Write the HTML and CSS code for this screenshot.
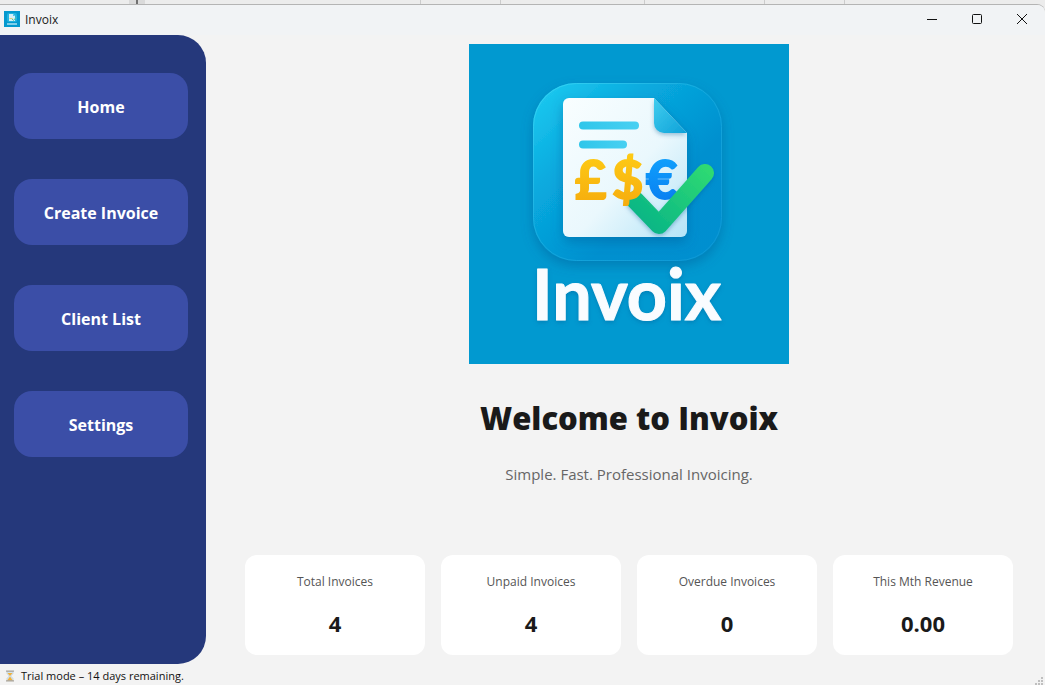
FILE: index.html
```html
<!DOCTYPE html>
<html lang="en">
<head>
<meta charset="utf-8">
<title>Invoix</title>
<link rel="stylesheet" href="styles.css">
</head>
<body>
<div class="backdrop"></div>
<div class="window">
  <header class="titlebar">
    <svg class="app-icon" viewBox="0 0 16 16" aria-hidden="true">
      <rect width="16" height="16" fill="#0499cf"/>
      <rect x="3" y="2" width="10" height="9" rx="2" fill="#22b3e0"/>
      <path d="M5 3h4l2 2v5H5z" fill="#d4f0f8"/>
      <path d="M9 3l2 2H9z" fill="#4cc3e6"/>
      <path d="M5.500 7.500h3" stroke="#d9cf7c"/>
      <path d="M8 8l1.500 1.500L12 6.500" stroke="#5fc49a" fill="none"/>
      <path d="M3 13h10" stroke="#7fcfea" stroke-width="2"/>
    </svg>
    <span class="app-name">Invoix</span>
    <div class="window-controls">
      <button class="window-button" type="button" aria-label="Minimize"><svg viewBox="0 0 12 12"><path d="M1 6.500h10"/></svg></button>
      <button class="window-button" type="button" aria-label="Maximize"><svg viewBox="0 0 12 12"><rect x="1.500" y="1.500" width="9" height="9" rx="1"/></svg></button>
      <button class="window-button" type="button" aria-label="Close"><svg viewBox="0 0 12 12"><path d="M1 1l10 10M11 1L1 11"/></svg></button>
    </div>
  </header>
  <div class="workspace">
    <nav class="sidebar" aria-label="Main">
      <button class="nav-button" type="button">Home</button>
      <button class="nav-button" type="button">Create Invoice</button>
      <button class="nav-button" type="button">Client List</button>
      <button class="nav-button" type="button">Settings</button>
    </nav>
    <main class="content">
      <svg class="logo" viewBox="0 0 320 320" role="img" aria-label="Invoix logo">
        <defs>
          <linearGradient id="tile" x1="0" y1="0" x2="1" y2="1">
            <stop offset="0" stop-color="#20cdf2"/><stop offset=".3" stop-color="#08abdf"/><stop offset=".65" stop-color="#0290cf"/><stop offset="1" stop-color="#078fd0"/>
          </linearGradient>
          <linearGradient id="rim" x1="0" y1="0" x2="1" y2="1">
            <stop offset="0" stop-color="#35d6f6"/><stop offset=".5" stop-color="#14a6dc"/><stop offset="1" stop-color="#0d97d5"/>
          </linearGradient>
          <linearGradient id="paper" x1="0" y1="0" x2="1" y2="1">
            <stop offset="0" stop-color="#f9feff"/><stop offset=".55" stop-color="#eaf8fd"/><stop offset="1" stop-color="#b5e4f7"/>
          </linearGradient>
          <linearGradient id="fold" x1="0" y1="0" x2="1" y2="1">
            <stop offset="0" stop-color="#41cdef"/><stop offset="1" stop-color="#0da1d8"/>
          </linearGradient>
          <linearGradient id="line"><stop offset="0" stop-color="#2fc6ea"/><stop offset="1" stop-color="#48d0f2"/></linearGradient>
          <linearGradient id="gold" x1="0" y1="0" x2="0" y2="1"><stop offset="0" stop-color="#ffcf16"/><stop offset="1" stop-color="#f5a90d"/></linearGradient>
          <linearGradient id="blue" x1="0" y1="0" x2="0" y2="1"><stop offset="0" stop-color="#11a8ff"/><stop offset="1" stop-color="#0879ef"/></linearGradient>
          <linearGradient id="green" gradientUnits="userSpaceOnUse" x1="238" y1="122" x2="178" y2="188"><stop offset="0" stop-color="#2fda72"/><stop offset="1" stop-color="#08b486"/></linearGradient>
          <filter id="shadow" x="-20%" y="-20%" width="140%" height="150%"><feDropShadow dx="0" dy="5" stdDeviation="6" flood-color="#00558f" flood-opacity=".4"/></filter>
          <filter id="soft" x="-20%" y="-20%" width="140%" height="150%"><feDropShadow dx="0" dy="2" stdDeviation="2" flood-color="#00558f" flood-opacity=".35"/></filter>
        </defs>
        <rect width="320" height="320" fill="#0199d0"/>
        <rect x="64" y="39" width="189" height="178" rx="43" fill="url(#tile)" filter="url(#shadow)"/>
        <rect x="64.500" y="39.500" width="188" height="177" rx="43" fill="none" stroke="url(#rim)"/>
        <path d="M100 54h85l33 35v98a6 6 0 0 1-6 6H100a6 6 0 0 1-6-6V60a6 6 0 0 1 6-6z" fill="url(#paper)" filter="url(#shadow)"/>
        <path d="M185 54l33 35h-23a10 10 0 0 1-10-10z" fill="url(#fold)" filter="url(#soft)"/>
        <rect x="110" y="77.500" width="60" height="8" rx="4" fill="url(#line)"/>
        <rect x="110" y="96.500" width="48" height="8" rx="4" fill="url(#line)"/>
        <text class="currency" x="177" y="155" fill="url(#blue)" stroke="url(#blue)">€</text>
        <path d="M166 156l24 25 46-52" fill="none" stroke="url(#green)" stroke-width="18" stroke-linecap="round" stroke-linejoin="round" filter="url(#soft)"/>
        <text class="currency" x="106" y="155" fill="url(#gold)" stroke="url(#gold)">£</text>
        <text class="currency" x="143" y="155" fill="url(#gold)" stroke="url(#gold)">$</text>
        <text class="wordmark" x="63" y="276" filter="url(#soft)">Invoix</text>
      </svg>
      <h1 class="welcome">Welcome to Invoix</h1>
      <p class="tagline">Simple. Fast. Professional Invoicing.</p>
      <section class="stats" aria-label="Summary">
        <article class="stat"><h2 class="stat-label">Total Invoices</h2><p class="stat-value">4</p></article>
        <article class="stat"><h2 class="stat-label">Unpaid Invoices</h2><p class="stat-value">4</p></article>
        <article class="stat"><h2 class="stat-label">Overdue Invoices</h2><p class="stat-value">0</p></article>
        <article class="stat"><h2 class="stat-label">This Mth Revenue</h2><p class="stat-value">0.00</p></article>
      </section>
    </main>
  </div>
  <footer class="statusbar">
    <svg class="hourglass" viewBox="0 0 10 12" aria-hidden="true">
      <path d="M2 1.500h6v2L5.700 6 8 8.500v2H2v-2L4.300 6 2 3.500z" fill="#d3e4ee" stroke="#b9cbd6" stroke-width=".6"/>
      <path d="M2.500 3h5L5 6zM5 6.500l2.800 4H2.200z" fill="#f2b13a"/>
      <path d="M1 1.200h8M1 10.800h8" stroke="#a8a39a" stroke-width="1.200"/>
    </svg>
    <span>Trial mode – 14 days remaining.</span>
    <svg class="grip" viewBox="0 0 8 8" aria-hidden="true"><path d="M6 0h2v2H6zM3 3h2v2H3zM6 3h2v2H6zM0 6h2v2H0zM3 6h2v2H3zM6 6h2v2H6z" fill="#bfbfbf"/></svg>
  </footer>
</div>
</body>
</html>
```
FILE: styles.css
```css
* {
  box-sizing: border-box;
}

body {
  margin: 0;
  min-height: 100vh;
  display: flex;
  flex-direction: column;
  background: #ececec;
  color: #1a1a1a;
  font-family: "Open Sans", "Noto Sans", sans-serif;
}

h1, h2, p {
  margin: 0;
}

button {
  border: 0;
  padding: 0;
  font: inherit;
}

.backdrop {
  height: 4px;
  background:
    linear-gradient(#707070, #707070) 136px 0 / 2px 4px no-repeat,
    linear-gradient(#dadada, #dadada) 129px 0 / 16px 4px no-repeat,
    linear-gradient(#cccccc, #cccccc) 420px 0 / 1px 4px no-repeat,
    linear-gradient(#cccccc, #cccccc) 500px 0 / 1px 4px no-repeat,
    linear-gradient(#cccccc, #cccccc) 644px 0 / 1px 4px no-repeat,
    linear-gradient(#cccccc, #cccccc) 764px 0 / 1px 4px no-repeat,
    linear-gradient(#cccccc, #cccccc) 844px 0 / 1px 4px no-repeat,
    #ececec;
}

.window {
  flex: 1;
  display: flex;
  flex-direction: column;
  border-top: 1px solid #b4b4b4;
  border-radius: 0 8px 0 0;
  background: #f3f3f3;
}

.titlebar {
  display: flex;
  align-items: center;
  height: 30px;
  padding: 0 1px 2px 4px;
  border-radius: 0 8px 0 0;
  background: #f1f3f5;
}

.app-icon {
  width: 16px;
  height: 16px;
  margin-right: 5px;
}

.app-name {
  font-size: 12px;
}

.window-controls {
  display: flex;
  margin-left: auto;
}

.window-button {
  display: grid;
  place-items: center;
  width: 45px;
  height: 28px;
  background: transparent;
}

.window-button svg {
  width: 12px;
  height: 12px;
  fill: none;
  stroke: #111111;
}

.workspace {
  flex: 1;
  display: flex;
}

.sidebar {
  display: flex;
  flex-direction: column;
  gap: 40px;
  width: 206px;
  padding: 38px 18px 38px 14px;
  border-radius: 0 28px 28px 0;
  background: #25387b;
}

.nav-button {
  height: 66px;
  padding-top: 2px;
  border-radius: 18px;
  background: #3b4ea7;
  color: #ffffff;
  font-size: 16px;
  font-weight: 700;
}

.content {
  flex: 1;
  display: flex;
  flex-direction: column;
  align-items: center;
  padding: 9px 32px 9px 39px;
}

.logo {
  width: 320px;
  height: 320px;
}

.currency {
  font-family: Lato, sans-serif;
  font-size: 54px;
  font-weight: 700;
  stroke-width: 2px;
}

.wordmark {
  font-family: Lato, sans-serif;
  font-size: 70px;
  font-weight: 700;
  fill: #f9fcff;
  stroke: #f9fcff;
  stroke-width: 1px;
  stroke-linejoin: round;
}

.welcome {
  margin-top: 32px;
  font-size: 31px;
  font-weight: 800;
  line-height: 44px;
}

.tagline {
  margin-top: 23px;
  color: #666666;
  font-size: 15px;
  line-height: 22px;
}

.stats {
  display: grid;
  grid-template-columns: repeat(4, 1fr);
  gap: 16px;
  width: 100%;
  margin-top: auto;
}

.stat {
  display: flex;
  flex-direction: column;
  align-items: center;
  gap: 18px;
  height: 100px;
  padding-top: 17px;
  border-radius: 12px;
  background: #ffffff;
}

.stat-label {
  color: #555555;
  font-size: 12px;
  font-weight: 400;
  line-height: 20px;
}

.stat-value {
  font-size: 22px;
  font-weight: 700;
  line-height: 26px;
}

.statusbar {
  display: flex;
  align-items: center;
  height: 21px;
  padding: 2px 2px 0 5px;
  color: #111111;
  font-size: 11px;
  line-height: 18px;
}

.hourglass {
  width: 10px;
  height: 12px;
  margin-right: 6px;
}

.grip {
  align-self: flex-end;
  width: 8px;
  height: 8px;
  margin-left: auto;
}
```
